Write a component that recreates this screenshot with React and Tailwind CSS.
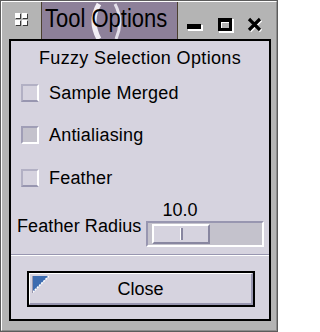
import React from "react";

const font = { fontFamily: '"Liberation Sans", Arial, sans-serif' };

const MenuIcon = () => (
  <svg width="14" height="14" viewBox="0 0 14 14">
    <rect x="1" y="1" width="5" height="5" fill="#3a3a3a" />
    <rect x="8" y="1" width="5" height="5" fill="#3a3a3a" />
    <rect x="1" y="8" width="5" height="5" fill="#3a3a3a" />
    <rect x="8" y="8" width="5" height="5" fill="#3a3a3a" />
    <rect x="0" y="0" width="5" height="5" fill="#fff" />
    <rect x="7" y="0" width="5" height="5" fill="#fff" />
    <rect x="0" y="7" width="5" height="5" fill="#fff" />
    <rect x="7" y="7" width="5" height="5" fill="#fff" />
  </svg>
);

const MinIcon = () => (
  <svg width="16" height="16" viewBox="0 0 16 16">
    <rect x="1" y="8" width="15" height="6" fill="#fff" />
    <rect x="0" y="7" width="14" height="5" fill="#000" />
  </svg>
);

const MaxIcon = () => (
  <svg width="16" height="16" viewBox="0 0 16 16">
    <rect x="1" y="2" width="15" height="14" fill="#fff" />
    <rect x="0" y="1" width="14" height="13" fill="#000" />
    <rect x="3" y="5" width="8" height="6" fill="#fff" />
    <rect x="4" y="6" width="7" height="5" fill="#b4b4b4" />
  </svg>
);

const CloseIcon = () => (
  <svg width="16" height="16" viewBox="0 0 16 16">
    <path d="M3 3 L14 14 M14 3 L3 14" stroke="#fff" strokeWidth="3.2" />
    <path d="M2 2 L13 13 M13 2 L2 13" stroke="#000" strokeWidth="3.2" />
  </svg>
);

const Check = ({ pressed }) => (
  <span
    className={
      pressed
        ? "w-[18px] h-[18px] bg-[#c4c2cc] border-2 border-t-[#a09eb6] border-l-[#a09eb6] border-r-white border-b-white"
        : "w-[18px] h-[18px] bg-[#d6d3df] border-2 border-t-[#b2b0c4] border-l-[#b2b0c4] border-r-white border-b-[#9896b0]"
    }
  />
);

const Row = ({ label, pressed, className }) => (
  <div className={"flex items-center h-[20px] " + className}>
    <div className="ml-[10px] flex items-center">
      <Check pressed={pressed} />
    </div>
    <span className="ml-[10px] text-[18px] leading-[20px] tracking-[0.2px] text-black">
      {label}
    </span>
  </div>
);

export default function App() {
  return (
    <div
      className="w-[278px] h-[332px] bg-[#b4b4b4] border border-[#5c5c5c]"
      style={font}
    >
      <div className="h-full flex flex-col border-t border-l border-white border-r border-b border-r-[#8c8c8c] border-b-[#8c8c8c]">
        {/* title bar */}
        <div className="h-[37px] flex">
          <div className="w-[39px] pl-[13px] pt-[11px]">
            <MenuIcon />
          </div>
          <div className="relative w-[137px] bg-[#8d8099] border-l border-r border-[#4b4030] overflow-hidden">
            <svg
              className="absolute left-[47px] top-0"
              width="36"
              height="37"
              viewBox="0 0 36 37"
            >
              <path d="M10 2 Q0 19 10 37" stroke="#f2eff5" strokeWidth="5" fill="none" />
              <path d="M26 2 Q35 19 27 37" stroke="#e4e0ea" strokeWidth="3" fill="none" />
            </svg>
            <div className="relative pl-[3px] text-[22px] leading-[37px] text-black scale-y-120 origin-[0_29px] whitespace-nowrap">
              Tool Options
            </div>
          </div>
          <div className="flex pt-[15px] pl-[9px]">
            <MinIcon />
            <div className="ml-[15px]">
              <MaxIcon />
            </div>
            <div className="ml-[13px]">
              <CloseIcon />
            </div>
          </div>
        </div>

        {/* panel */}
        <div className="ml-[7px] w-[262px] h-[282px] border-2 border-black bg-[#d6d3df] flex flex-col">
          <div className="mt-[7px] text-center text-[18px] leading-[20px] tracking-[0.35px] text-black">
            Fuzzy Selection Options
          </div>

          <Row label="Sample Merged" className="mt-[15px]" />
          <Row label="Antialiasing" pressed className="mt-[22px]" />
          <Row label="Feather" className="mt-[23px]" />

          <div className="mt-[12px] flex">
            <span className="ml-[6px] mt-[16px] text-[18px] leading-[20px] tracking-[0.1px] text-black whitespace-nowrap">
              Feather Radius
            </span>
            <div className="ml-[5px] flex flex-col">
              <span className="pl-[16px] text-[18px] leading-[20px] text-black">10.0</span>
              <div className="mt-[1px] w-[118px] h-[26px] bg-[#c4c2cc] border-2 border-t-[#9896b0] border-l-[#9896b0] border-r-white border-b-white flex items-center pl-[4px]">
                <div className="w-[58px] h-[20px] bg-[#d6d3df] border-2 border-t-white border-l-white border-r-[#8886a0] border-b-[#8886a0] flex items-center justify-center">
                  <div className="h-[12px] w-[3px] border-l border-white border-r-2 border-r-[#8886a0]" />
                </div>
              </div>
            </div>
          </div>

          <div className="mt-[7px] h-[2px] border-t border-[#9896b0] border-b border-b-white" />

          <div className="mt-[15px] ml-[16px] w-[228px] h-[36px] border-2 border-black">
            <div className="relative h-full border-t border-l border-white border-r-2 border-b-2 border-r-[#9896b0] border-b-[#9896b0] flex items-center justify-center">
              <svg className="absolute left-[2px] top-[2px]" width="17" height="17" viewBox="0 0 17 17">
                <polygon points="0,0 17,0 0,17" fill="#3d6cb0" />
                <line x1="17" y1="0" x2="0" y2="17" stroke="#fff" strokeWidth="1.5" strokeDasharray="2 1" />
                <rect x="0" y="0" width="1" height="17" fill="#9a98b0" />
              </svg>
              <span className="text-[18px] leading-[20px] text-black">Close</span>
            </div>
          </div>
        </div>
      </div>
    </div>
  );
}
